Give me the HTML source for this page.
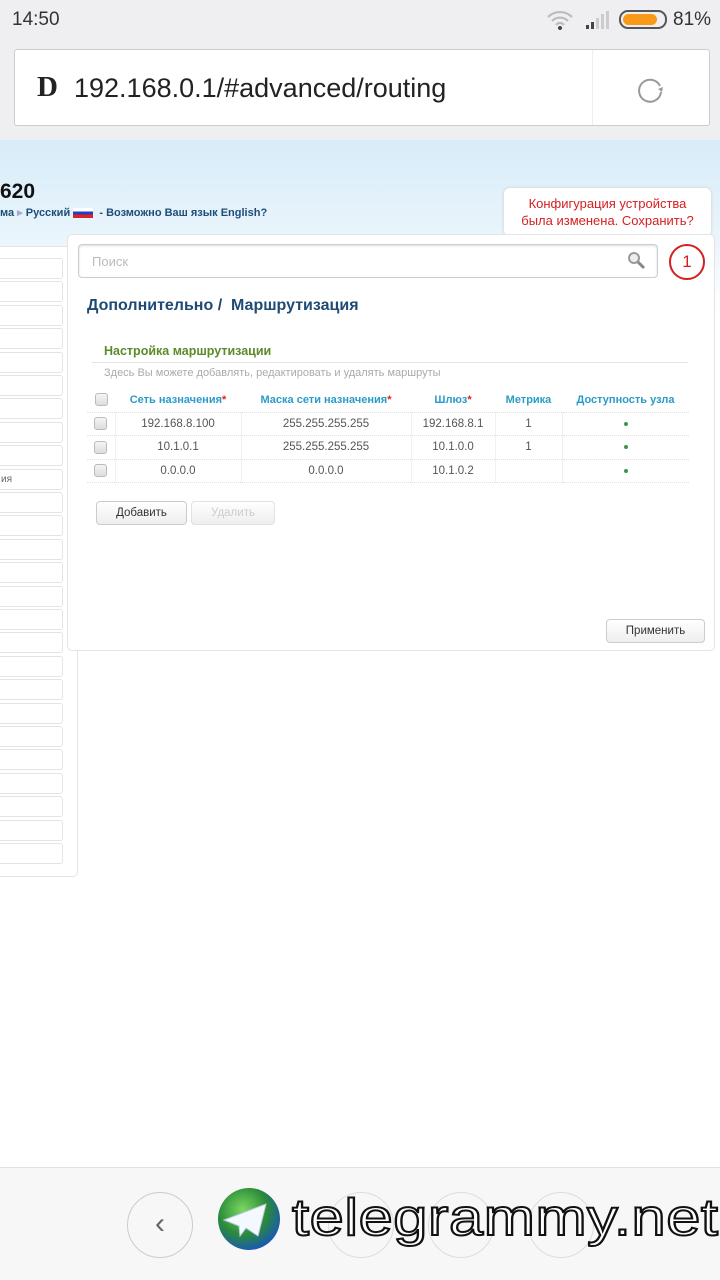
<!DOCTYPE html>
<html><head><meta charset="utf-8"><style>
*{margin:0;padding:0;box-sizing:border-box}
body{width:720px;height:1280px;overflow:hidden;background:#fff;font-family:"Liberation Sans",sans-serif;position:relative}
.abs{position:absolute}
.status{left:0;top:0;width:720px;height:140px;background:#efeff1}
.hdr{left:0;top:140px;width:720px;height:170px;background:linear-gradient(#d7ecf9,#e9f4fb 55%,#fff)}
.mi{position:absolute;left:-10px;width:73px;height:21px;border:1px solid #e4e4e4;border-radius:3px;background:#fff}
th{font-size:11px;color:#2a9cc8;font-weight:bold;text-align:center;height:24px}
td{font-size:11.5px;color:#555;text-align:center;height:23.5px;border-top:1px dotted #e2e2e2;border-left:1px solid #f0f0f0}
.cb{display:inline-block;width:13px;height:13px;border:1px solid #bbb;border-radius:3px;background:linear-gradient(#f4f4f4,#ddd);vertical-align:middle}
.dot{display:inline-block;width:4px;height:4px;border-radius:50%;background:#3a9a4a;vertical-align:middle}
.btn{position:absolute;height:24px;border:1px solid #ccc;border-radius:4px;background:linear-gradient(#fff,#eee);font-size:11.5px;text-align:center;line-height:22px}
</style></head><body>
<div class="abs status"></div>
<div class="abs" style="left:12px;top:9px;font-size:19px;color:#333">14:50</div>
<svg class="abs" style="left:546px;top:10px" width="28" height="20" viewBox="0 0 28 20"><path d="M2 7a17 17 0 0 1 24 0M6 11a11 11 0 0 1 16 0M10 15a5 5 0 0 1 8 0" stroke="#bbb" stroke-width="2.2" fill="none"/><circle cx="14" cy="18" r="2" fill="#444"/></svg>
<svg class="abs" style="left:584px;top:10px" width="26" height="20"><rect x="2" y="15" width="3" height="4" fill="#444"/><rect x="7" y="12" width="3" height="7" fill="#444"/><rect x="12" y="8" width="3" height="11" fill="#ccc"/><rect x="17" y="4" width="3" height="15" fill="#ccc"/><rect x="22" y="1" width="3" height="18" fill="#ccc"/></svg>
<div class="abs" style="left:619px;top:10px;width:48px;height:19px;border:2px solid #555;border-radius:9px;padding:2px"><div style="width:34px;height:11px;background:#f89a18;border-radius:6px"></div></div>
<div class="abs" style="left:673px;top:9px;font-size:19px;color:#333">81%</div>
<div class="abs" style="left:14px;top:49px;width:696px;height:77px;background:#fff;border:1px solid #ccc;border-radius:3px"></div>
<div class="abs" style="left:592px;top:50px;width:1px;height:75px;background:#eee"></div>
<div class="abs" style="left:37px;top:71px;font-family:'Liberation Serif',serif;font-weight:bold;font-size:29px;color:#222">D</div>
<div class="abs" style="left:74px;top:73px;font-size:27px;color:#222">192.168.0.1/#advanced/routing</div>
<svg class="abs" style="left:636px;top:75px" width="30" height="30"><path d="M24 11A11 11 0 1 0 25 17" stroke="#999" stroke-width="2" fill="none"/><path d="M22 14l4 3 1-5z" fill="#999"/></svg>
<div class="abs hdr"></div>
<div class="abs" style="left:0;top:180px;font-size:21px;font-weight:bold;color:#111">620</div>
<div class="abs" style="left:0;top:206px;font-size:11px;font-weight:bold;color:#1e4d7a">ма <span style="color:#aac">▸</span> Русский <span style="display:inline-block;width:20px;height:10px;background:linear-gradient(#fff 33%,#1d3fc8 33%,#1d3fc8 66%,#d22 66%);vertical-align:middle"></span> &nbsp;- Возможно Ваш язык English?</div>
<div class="abs" style="left:504px;top:188px;width:207px;height:48px;background:#fff;border-radius:6px;box-shadow:0 0 3px #ccc;color:#d42020;font-size:13px;text-align:center;line-height:17px;padding-top:7px">Конфигурация устройства<br>была изменена. Сохранить?</div>
<div class="abs" style="left:-10px;top:246px;width:88px;height:631px;border:1px solid #e4e4e4;border-radius:5px;background:#fff"></div>
<div id="menu"></div>
<div class="abs" style="left:67px;top:234px;width:648px;height:417px;background:#fff;border:1px solid #e4e4e4;border-radius:5px"></div>
<div class="abs" style="left:78px;top:244px;width:580px;height:34px;border:1px solid #ccc;border-radius:4px;box-shadow:inset 0 1px 2px #ddd;color:#bbb;font-size:13px;padding:9px 13px">Поиск</div>
<svg class="abs" style="left:627px;top:251px" width="20" height="20"><circle cx="7" cy="7" r="5" stroke="#999" stroke-width="2" fill="#eee"/><path d="M11 11l6 6" stroke="#888" stroke-width="3"/></svg>
<div class="abs" style="left:669px;top:244px;width:36px;height:36px;border:2px solid #d42020;border-radius:50%;color:#d42020;font-size:17px;text-align:center;line-height:32px">1</div>
<div class="abs" style="left:87px;top:297px;font-size:16px;font-weight:bold;color:#1e4a74">Дополнительно /&nbsp; Маршрутизация</div>
<div class="abs" style="left:104px;top:344px;font-size:12.5px;font-weight:bold;color:#5a8a2a">Настройка маршрутизации</div>
<div class="abs" style="left:92px;top:362px;width:596px;height:1px;background:#e4e4e4"></div>
<div class="abs" style="left:104px;top:367px;font-size:11px;color:#aaa">Здесь Вы можете добавлять, редактировать и удалять маршруты</div>
<table class="abs" style="left:87px;top:388px;width:602px;border-collapse:collapse">
<tr><th style="width:28px"><span class="cb"></span></th><th style="width:126px">Сеть назначения<span style="color:#d22">*</span></th><th style="width:170px">Маска сети назначения<span style="color:#d22">*</span></th><th style="width:84px">Шлюз<span style="color:#d22">*</span></th><th style="width:67px">Метрика</th><th>Доступность узла</th></tr>
<tr><td style="border-left:0"><span class="cb"></span></td><td>192.168.8.100</td><td>255.255.255.255</td><td>192.168.8.1</td><td>1</td><td><span class="dot"></span></td></tr>
<tr><td style="border-left:0"><span class="cb"></span></td><td>10.1.0.1</td><td>255.255.255.255</td><td>10.1.0.0</td><td>1</td><td><span class="dot"></span></td></tr>
<tr><td style="border-left:0;border-bottom:1px dotted #e2e2e2"><span class="cb"></span></td><td style="border-bottom:1px dotted #e2e2e2">0.0.0.0</td><td style="border-bottom:1px dotted #e2e2e2">0.0.0.0</td><td style="border-bottom:1px dotted #e2e2e2">10.1.0.2</td><td style="border-bottom:1px dotted #e2e2e2"></td><td style="border-bottom:1px dotted #e2e2e2"><span class="dot"></span></td></tr>
</table>
<div class="btn" style="left:96px;top:501px;width:91px;color:#333">Добавить</div>
<div class="btn" style="left:191px;top:501px;width:84px;color:#ccc;border-color:#e2e2e2">Удалить</div>
<div class="btn" style="left:606px;top:619px;width:99px;color:#333">Применить</div>
<div class="abs" style="left:0;top:1167px;width:720px;height:113px;background:#f7f7f7;border-top:1px solid #e2e2e2"></div>
<div class="abs" style="left:127px;top:1192px;width:66px;height:66px;border:1px solid #ccc;border-radius:50%;color:#666;font-size:30px;text-align:center;line-height:62px">‹</div>
<div class="abs" style="left:328px;top:1192px;width:66px;height:66px;border:1px solid #ddd;border-radius:50%"></div>
<div class="abs" style="left:428px;top:1192px;width:66px;height:66px;border:1px solid #ddd;border-radius:50%"></div>
<div class="abs" style="left:528px;top:1192px;width:66px;height:66px;border:1px solid #ddd;border-radius:50%"></div>
<div class="abs" style="left:218px;top:1188px;width:62px;height:62px;border-radius:50%;background:radial-gradient(circle at 40% 35%,#7cd860,#2a8a3a 45%,#1a5ab0 75%)"></div>
<svg class="abs" style="left:222px;top:1200px" width="50" height="40"><path d="M2 20L44 4L36 36L24 28L18 36L17 26Z" fill="#f4f8ff" stroke="#bcd" stroke-width="1"/></svg>
<div class="abs" style="left:292px;top:1188px;font-size:52px;color:#fff;-webkit-text-stroke:2px #111;transform-origin:0 0;transform:scaleX(1.18);letter-spacing:0.5px">telegrammy.net</div>
<script>
var m=document.getElementById('menu'),s='';
for(var i=0;i<26;i++){var y=258+i*23.4;s+='<div class="mi" style="top:'+y+'px">'+(i==9?'<span style="font-size:10px;color:#666;position:absolute;left:10px;top:4px">ия</span>':'')+'</div>';}
m.innerHTML=s;
</script>
</body></html>
